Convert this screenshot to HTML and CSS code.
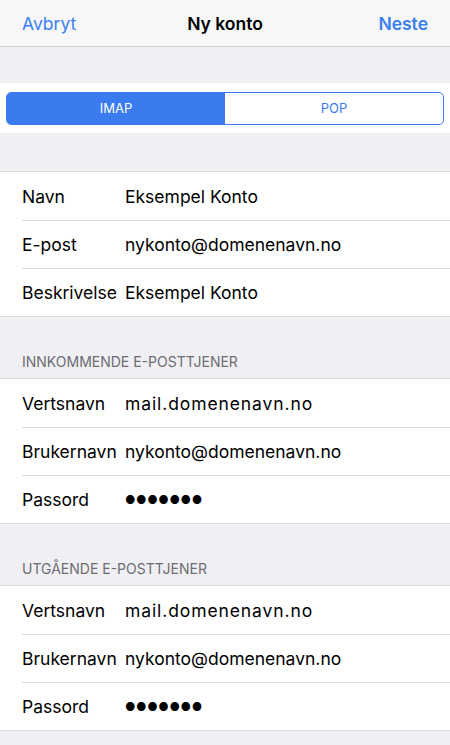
FILE: index.html
```html
<!DOCTYPE html>
<html lang="no">
<head>
    <meta charset="UTF-8">
    <meta name="viewport" content="width=device-width, initial-scale=1.0">
    <title>Ny konto</title>
    <link rel="stylesheet" href="styles.css">
</head>
<body>
    <div class="navbar">
        <span class="nav-btn">Avbryt</span>
        <span class="nav-title">Ny konto</span>
        <span class="nav-btn nav-done">Neste</span>
    </div>

    <div class="gap"></div>

    <div class="segment-band">
        <div class="segmented">
            <div class="seg active">IMAP</div>
            <div class="seg">POP</div>
        </div>
    </div>

    <div class="gap gap-small"></div>

    <div class="group">
        <div class="row"><span class="label">Navn</span><span class="value">Eksempel Konto</span></div>
        <div class="row"><span class="label">E-post</span><span class="value">nykonto@domenenavn.no</span></div>
        <div class="row"><span class="label">Beskrivelse</span><span class="value">Eksempel Konto</span></div>
    </div>

    <div class="section-header">INNKOMMENDE E-POSTTJENER</div>
    <div class="group">
        <div class="row"><span class="label">Vertsnavn</span><span class="value host">mail.domenenavn.no</span></div>
        <div class="row"><span class="label">Brukernavn</span><span class="value">nykonto@domenenavn.no</span></div>
        <div class="row"><span class="label">Passord</span><span class="value dots">●●●●●●●</span></div>
    </div>

    <div class="section-header">UTGÅENDE E-POSTTJENER</div>
    <div class="group">
        <div class="row"><span class="label">Vertsnavn</span><span class="value host">mail.domenenavn.no</span></div>
        <div class="row"><span class="label">Brukernavn</span><span class="value">nykonto@domenenavn.no</span></div>
        <div class="row"><span class="label">Passord</span><span class="value dots">●●●●●●●</span></div>
    </div>
</body>
</html>
```

FILE: styles.css
```css
body {
    margin: 0;
    background: #efeff4;
    font-family: Inter, Roboto, 'Liberation Sans', sans-serif;
    color: #000;
}
.navbar {
    height: 46px;
    background: #f7f7f8;
    border-bottom: 1px solid #d0d0d4;
    display: flex;
    align-items: center;
    justify-content: space-between;
    padding: 0 22px;
    font-size: 17.5px;
}
.nav-btn {
    color: #3a7ff1;
    width: 80px;
}
.nav-done {
    font-weight: 600;
    text-align: right;
}
.nav-title {
    font-weight: 600;
}
.gap {
    height: 36px;
}
.gap-small {
    height: 38px;
}
.segment-band {
    background: #fff;
    height: 50px;
    padding: 0 6px;
    display: flex;
    align-items: center;
}
.segmented {
    flex: 1;
    display: flex;
    height: 33px;
    border: 1px solid #3a7bf0;
    border-radius: 5px;
    overflow: hidden;
    box-sizing: border-box;
}
.seg {
    flex: 1;
    display: flex;
    align-items: center;
    justify-content: center;
    font-size: 13px;
    color: #3a7bf0;
}
.seg.active {
    background: #3a7bf0;
    color: #fff;
}
.group {
    background: #fff;
    border-top: 1px solid #dcdce0;
    border-bottom: 1px solid #dcdce0;
}
.row {
    height: 48px;
    box-sizing: border-box;
    display: flex;
    align-items: center;
    margin-left: 22px;
    font-size: 17.5px;
}
.row + .row {
    border-top: 1px solid #dcdce0;
}
.label {
    width: 103px;
    flex-shrink: 0;
}
.host {
    letter-spacing: 0.9px;
}
.dots {
    font-size: 11.5px;
    letter-spacing: 0.6px;
}
.section-header {
    height: 61px;
    box-sizing: border-box;
    padding: 0 22px 8px;
    display: flex;
    align-items: flex-end;
    font-size: 14px;
    color: #6d6d72;
}
```
